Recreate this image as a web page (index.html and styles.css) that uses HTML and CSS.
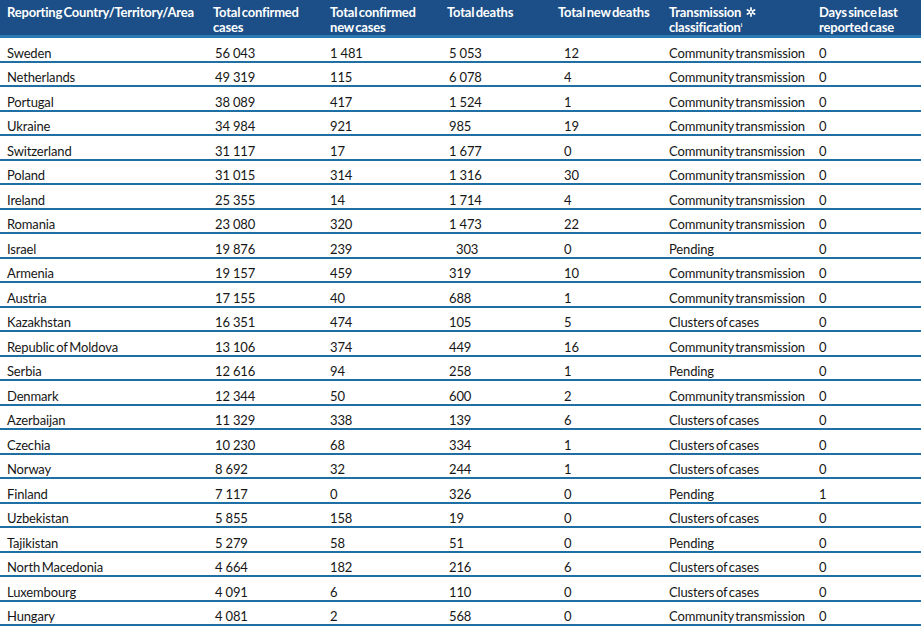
FILE: index.html
```html
<!DOCTYPE html>
<html lang="en">
<head>
<meta charset="utf-8">
<title>COVID-19 table</title>
<link rel="stylesheet" href="styles.css">
</head>
<body>
<table class="covid">
  <thead>
    <tr>
      <th>Reporting Country/Territory/Area</th>
      <th>Total confirmed<br>cases</th>
      <th>Total confirmed<br>new cases</th>
      <th>Total deaths</th>
      <th>Total new deaths</th>
      <th>Transmission <svg class="star" viewBox="0 0 10 10" width="10" height="10"><g stroke="#fff" stroke-width="1.7" stroke-linecap="round"><line x1="5" y1="0.9" x2="5" y2="9.1"/><line x1="1.4" y1="2.9" x2="8.6" y2="7.1"/><line x1="1.4" y1="7.1" x2="8.6" y2="2.9"/></g><circle cx="5" cy="5" r="1" fill="#1c4f87"/></svg><br>classification<sup>i</sup></th>
      <th>Days since last<br>reported case</th>
    </tr>
  </thead>
  <tbody>
    <tr><td>Sweden</td><td>56&#8197;043</td><td>1&#8197;481</td><td>5&#8197;053</td><td>12</td><td>Community transmission</td><td>0</td></tr>
    <tr><td>Netherlands</td><td>49&#8197;319</td><td>115</td><td>6&#8197;078</td><td>4</td><td>Community transmission</td><td>0</td></tr>
    <tr><td>Portugal</td><td>38&#8197;089</td><td>417</td><td>1&#8197;524</td><td>1</td><td>Community transmission</td><td>0</td></tr>
    <tr><td>Ukraine</td><td>34&#8197;984</td><td>921</td><td>985</td><td>19</td><td>Community transmission</td><td>0</td></tr>
    <tr><td>Switzerland</td><td>31&#8197;117</td><td>17</td><td>1&#8197;677</td><td>0</td><td>Community transmission</td><td>0</td></tr>
    <tr><td>Poland</td><td>31&#8197;015</td><td>314</td><td>1&#8197;316</td><td>30</td><td>Community transmission</td><td>0</td></tr>
    <tr><td>Ireland</td><td>25&#8197;355</td><td>14</td><td>1&#8197;714</td><td>4</td><td>Community transmission</td><td>0</td></tr>
    <tr><td>Romania</td><td>23&#8197;080</td><td>320</td><td>1&#8197;473</td><td>22</td><td>Community transmission</td><td>0</td></tr>
    <tr><td>Israel</td><td>19&#8197;876</td><td>239</td><td class="shift">303</td><td>0</td><td>Pending</td><td>0</td></tr>
    <tr><td>Armenia</td><td>19&#8197;157</td><td>459</td><td>319</td><td>10</td><td>Community transmission</td><td>0</td></tr>
    <tr><td>Austria</td><td>17&#8197;155</td><td>40</td><td>688</td><td>1</td><td>Community transmission</td><td>0</td></tr>
    <tr><td>Kazakhstan</td><td>16&#8197;351</td><td>474</td><td>105</td><td>5</td><td>Clusters of cases</td><td>0</td></tr>
    <tr><td>Republic of Moldova</td><td>13&#8197;106</td><td>374</td><td>449</td><td>16</td><td>Community transmission</td><td>0</td></tr>
    <tr><td>Serbia</td><td>12&#8197;616</td><td>94</td><td>258</td><td>1</td><td>Pending</td><td>0</td></tr>
    <tr><td>Denmark</td><td>12&#8197;344</td><td>50</td><td>600</td><td>2</td><td>Community transmission</td><td>0</td></tr>
    <tr><td>Azerbaijan</td><td>11&#8197;329</td><td>338</td><td>139</td><td>6</td><td>Clusters of cases</td><td>0</td></tr>
    <tr><td>Czechia</td><td>10&#8197;230</td><td>68</td><td>334</td><td>1</td><td>Clusters of cases</td><td>0</td></tr>
    <tr><td>Norway</td><td>8&#8197;692</td><td>32</td><td>244</td><td>1</td><td>Clusters of cases</td><td>0</td></tr>
    <tr><td>Finland</td><td>7&#8197;117</td><td>0</td><td>326</td><td>0</td><td>Pending</td><td>1</td></tr>
    <tr><td>Uzbekistan</td><td>5&#8197;855</td><td>158</td><td>19</td><td>0</td><td>Clusters of cases</td><td>0</td></tr>
    <tr><td>Tajikistan</td><td>5&#8197;279</td><td>58</td><td>51</td><td>0</td><td>Pending</td><td>0</td></tr>
    <tr><td>North Macedonia</td><td>4&#8197;664</td><td>182</td><td>216</td><td>6</td><td>Clusters of cases</td><td>0</td></tr>
    <tr><td>Luxembourg</td><td>4&#8197;091</td><td>6</td><td>110</td><td>0</td><td>Clusters of cases</td><td>0</td></tr>
    <tr><td>Hungary</td><td>4&#8197;081</td><td>2</td><td>568</td><td>0</td><td>Community transmission</td><td>0</td></tr>
  </tbody>
</table>
</body>
</html>
```

FILE: styles.css
```css
html, body {
  margin: 0;
  padding: 0;
  background: #ffffff;
}

.covid {
  width: 921px;
  border-collapse: collapse;
  table-layout: fixed;
  font-family: "Lato", "Liberation Sans", sans-serif;
  color: #161616;
}

.covid th {
  background: #1c4f87;
  color: #ffffff;
  font-weight: 700;
  font-size: 13px;
  line-height: 15px;
  text-align: left;
  vertical-align: top;
  height: 35px;
  box-sizing: border-box;
  padding: 5px 0 0 0;
  border-bottom: 3px solid #2a79b2;
  word-spacing: -1.5px;
  letter-spacing: -0.2px;
}

.covid th sup {
  font-size: 6px;
  line-height: 0;
  vertical-align: 5px;
}

.covid .star {
  vertical-align: 0;
  margin-left: 3px;
}

.covid td {
  font-size: 13px;
  line-height: 15px;
  height: 24.5px;
  box-sizing: border-box;
  padding: 7.5px 0 0 0;
  vertical-align: top;
  border-bottom: 2px solid #1f6fa4;
  white-space: nowrap;
  word-spacing: -1.5px;
  letter-spacing: -0.15px;
}

/* column widths and text offsets */
.covid th:nth-child(1), .covid td:nth-child(1) { width: 206px; padding-left: 7px; }
.covid th:nth-child(2), .covid td:nth-child(2) { width: 117px; padding-left: 7px; }
.covid th:nth-child(3), .covid td:nth-child(3) { width: 117px; padding-left: 7px; }
.covid th:nth-child(4), .covid td:nth-child(4) { width: 111px; padding-left: 7px; }
.covid th:nth-child(5), .covid td:nth-child(5) { width: 111px; padding-left: 7px; }
.covid th:nth-child(6), .covid td:nth-child(6) { width: 150px; padding-left: 7px; }
.covid th:nth-child(7), .covid td:nth-child(7) { width: 109px; padding-left: 7px; }

.covid td:nth-child(2) { padding-left: 9px; }
.covid td:nth-child(4) { padding-left: 9px; }
.covid td:nth-child(5) { padding-left: 13px; }
.covid td.shift { padding-left: 16px; }
```
